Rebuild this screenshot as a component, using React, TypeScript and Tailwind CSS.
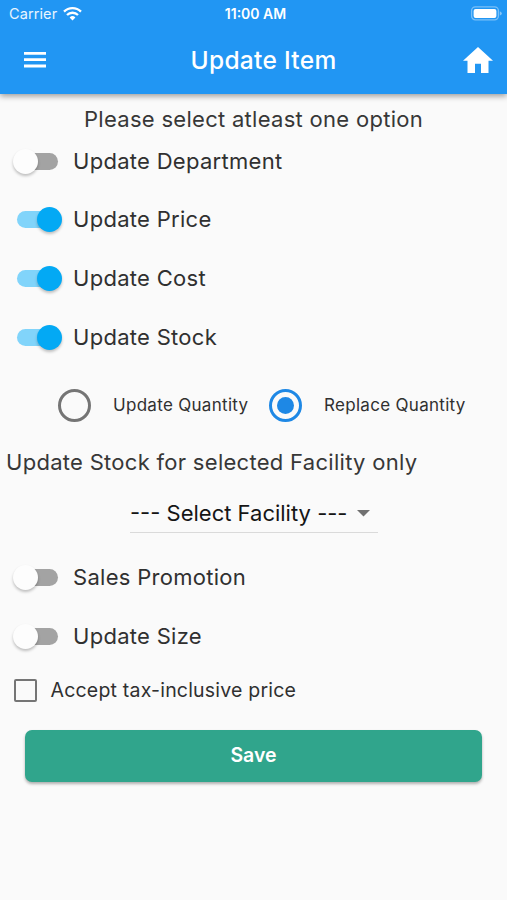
import { useState } from "react";

type SwitchRowProps = {
  label: string;
  checked: boolean;
  onChange: () => void;
};

const SwitchRow = ({ label, checked, onChange }: SwitchRowProps) => (
  <label className="flex h-[58.6px] items-center pl-[17px]">
    <input type="checkbox" className="sr-only" checked={checked} onChange={onChange} />
    <span
      className={`relative block h-[17px] w-[40.5px] rounded-full ${checked ? "bg-[#81d4fa]" : "bg-[#a3a3a3]"}`}
    >
      <span
        className={`absolute -top-[4px] size-[25px] rounded-full shadow-[0_2px_3px_rgba(0,0,0,0.24)] ${checked ? "left-[19.5px] bg-[#03a9f4]" : "-left-[4px] bg-[#fdfdfd]"}`}
      />
    </span>
    <span className="ml-[15.5px] text-[22px] tracking-[0.29px]">{label}</span>
  </label>
);

const RadioMark = ({ selected }: { selected: boolean }) => (
  <span
    className={`flex size-[33px] shrink-0 items-center justify-center rounded-full border-[3.3px] ${selected ? "border-[#1e88e5]" : "border-[#757575]"}`}
  >
    {selected ? <span className="size-[16.5px] rounded-full bg-[#1e88e5]" /> : null}
  </span>
);

const StatusBar = () => (
  <div className="flex h-[27px] items-center justify-between pl-[9px] pr-[5px] text-[14.5px]">
    <div className="flex w-[120px] items-center gap-[6px] text-white/90">
      <span className="tracking-[0.1px]">Carrier</span>
      <svg width="19" height="15" viewBox="0 0 19 15" fill="none" stroke="white" strokeWidth="2.3">
        <path d="M1 5.6a12.1 12.1 0 0 1 17 0" />
        <path d="M4 9a7.8 7.8 0 0 1 11 0" />
        <path d="M9.5 14.4 6.6 11.5a4.1 4.1 0 0 1 5.8 0z" fill="white" stroke="none" />
      </svg>
    </div>
    <span className="text-[14px] font-semibold">11:00 AM</span>
    <div className="flex w-[120px] justify-end">
      <svg width="32" height="15" viewBox="0 0 32 15">
        <rect x="1.6" y="0.9" width="26.8" height="13" rx="3.8" fill="none" stroke="white" strokeOpacity="0.4" strokeWidth="1.3" />
        <rect x="3.6" y="2.9" width="22.8" height="9" rx="2" fill="white" />
        <path d="M29.8 5.3q2 .7 2 2.1t-2 2.1z" fill="white" fillOpacity="0.45" />
      </svg>
    </div>
  </div>
);

const App = () => {
  const [options, setOptions] = useState({
    department: false,
    price: true,
    cost: true,
    stock: true,
    promotion: false,
    size: false,
  });
  const [mode, setMode] = useState("replace");

  const toggle = (key: keyof typeof options) => () =>
    setOptions((prev) => ({ ...prev, [key]: !prev[key] }));

  return (
    <div className="flex h-[900px] w-[507px] flex-col overflow-hidden bg-[#fafafa] font-['Inter',sans-serif] text-[#303030]">
      <header className="h-[94px] shrink-0 bg-[#2196f3] text-white shadow-[0_2px_6px_rgba(0,0,0,0.4)]">
        <StatusBar />
        <div className="flex h-[66px] items-center justify-between pl-[24px] pr-[14px]">
          <button aria-label="Menu" className="flex w-[30px]">
            <svg width="22" height="16" viewBox="0 0 22 16" fill="white">
              <path d="M0 0h22v2.8H0zM0 6.3h22v2.8H0zM0 12.6h22v2.8H0z" />
            </svg>
          </button>
          <h1 className="ml-[10px] text-[24.5px] font-medium tracking-[0.3px]">Update Item</h1>
          <button aria-label="Home" className="flex w-[30px] justify-end">
            <svg width="30" height="26" viewBox="2 3 20 17" preserveAspectRatio="none" fill="white">
              <path d="M10 20v-6h4v6h5v-8h3L12 3 2 12h3v8z" />
            </svg>
          </button>
        </div>
      </header>

      <main className="flex flex-col pt-[10px]">
        <p className="h-[30px] text-center text-[22px] leading-[30px] tracking-[0.29px] text-[#373737]" >
          Please select atleast one option
        </p>
        <div className="-mt-[2px]">
          <SwitchRow label="Update Department" checked={options.department} onChange={toggle("department")} />
          <SwitchRow label="Update Price" checked={options.price} onChange={toggle("price")} />
          <SwitchRow label="Update Cost" checked={options.cost} onChange={toggle("cost")} />
          <SwitchRow label="Update Stock" checked={options.stock} onChange={toggle("stock")} />
        </div>

        <div className="flex h-[78px] items-center pl-[58px] text-[17px] tracking-[0.3px]">
          <button className="flex w-[211px] items-center gap-[22px]" onClick={() => setMode("update")}>
            <RadioMark selected={mode === "update"} />
            <span className="whitespace-nowrap">Update Quantity</span>
          </button>
          <button className="flex items-center gap-[22px]" onClick={() => setMode("replace")}>
            <RadioMark selected={mode === "replace"} />
            <span className="whitespace-nowrap">Replace Quantity</span>
          </button>
        </div>

        <p className="mt-[3px] h-[30px] pl-[6px] text-[22px] leading-[30px] tracking-[0.29px] text-[#373737]">
          Update Stock for selected Facility only
        </p>
        <button className="ml-[130px] mt-[18px] flex h-[38px] w-[248px] items-center border-b border-[#dadada] text-[22px] text-[#151515]">
          <span className="w-[227px] whitespace-nowrap text-left">--- Select Facility ---</span>
          <svg width="13" height="7" viewBox="0 0 13 7" fill="#707070">
            <path d="M0 0h13L6.5 6.5z" />
          </svg>
        </button>

        <div className="mt-[15px]">
          <SwitchRow label="Sales Promotion" checked={options.promotion} onChange={toggle("promotion")} />
          <SwitchRow label="Update Size" checked={options.size} onChange={toggle("size")} />
        </div>

        <label className="flex h-[50px] items-center pl-[14px]">
          <span className="size-[22.5px] border-[2.4px] border-[#757575] rounded-[2px]" />
          <span className="ml-[14px] text-[19.5px] tracking-[0.2px]">Accept tax-inclusive price</span>
        </label>

        <button className="mx-[25px] mt-[14px] h-[52px] rounded-[7px] bg-[#30a58c] text-[19.5px] font-semibold text-white shadow-[0_2px_3px_rgba(0,0,0,0.3)]">
          Save
        </button>
      </main>
    </div>
  );
};

export default App;
